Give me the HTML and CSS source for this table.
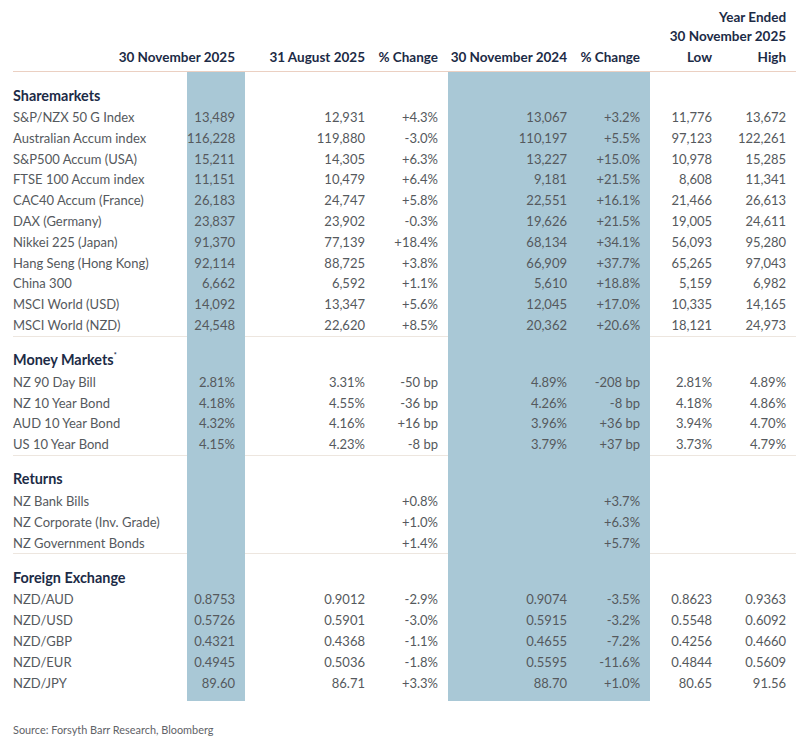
FILE: index.html
```html
<!DOCTYPE html>
<html lang="en">
<head>
<meta charset="utf-8">
<title>Market Summary</title>
<link rel="stylesheet" href="styles.css">
</head>
<body>
<div class="page">
<table class="mkt">
  <colgroup>
    <col class="w-label"><col class="w-c1"><col class="w-c2"><col class="w-c3"><col class="w-c4"><col class="w-c5"><col class="w-c6"><col class="w-c7">
  </colgroup>
  <thead>
    <tr class="h1"><th colspan="6"></th><th colspan="2">Year Ended</th></tr>
    <tr class="h2"><th colspan="6"></th><th colspan="2">30 November 2025</th></tr>
    <tr class="h3"><th colspan="2">30 November 2025</th><th>31 August 2025</th><th>% Change</th><th>30 November 2024</th><th>% Change</th><th>Low</th><th>High</th></tr>
  </thead>
  <tbody>
    <tr class="sec first"><td class="lbl">Sharemarkets</td><td class="hl"></td><td></td><td></td><td class="hl"></td><td class="hl"></td><td></td><td></td></tr>
    <tr><td class="lbl">S&amp;P/NZX 50 G Index</td><td class="hl">13,489</td><td>12,931</td><td>+4.3%</td><td class="hl">13,067</td><td class="hl">+3.2%</td><td>11,776</td><td>13,672</td></tr>
    <tr><td class="lbl">Australian Accum index</td><td class="hl">116,228</td><td>119,880</td><td>-3.0%</td><td class="hl">110,197</td><td class="hl">+5.5%</td><td>97,123</td><td>122,261</td></tr>
    <tr><td class="lbl">S&amp;P500 Accum (USA)</td><td class="hl">15,211</td><td>14,305</td><td>+6.3%</td><td class="hl">13,227</td><td class="hl">+15.0%</td><td>10,978</td><td>15,285</td></tr>
    <tr><td class="lbl">FTSE 100 Accum index</td><td class="hl">11,151</td><td>10,479</td><td>+6.4%</td><td class="hl">9,181</td><td class="hl">+21.5%</td><td>8,608</td><td>11,341</td></tr>
    <tr><td class="lbl">CAC40 Accum (France)</td><td class="hl">26,183</td><td>24,747</td><td>+5.8%</td><td class="hl">22,551</td><td class="hl">+16.1%</td><td>21,466</td><td>26,613</td></tr>
    <tr><td class="lbl">DAX (Germany)</td><td class="hl">23,837</td><td>23,902</td><td>-0.3%</td><td class="hl">19,626</td><td class="hl">+21.5%</td><td>19,005</td><td>24,611</td></tr>
    <tr><td class="lbl">Nikkei 225 (Japan)</td><td class="hl">91,370</td><td>77,139</td><td>+18.4%</td><td class="hl">68,134</td><td class="hl">+34.1%</td><td>56,093</td><td>95,280</td></tr>
    <tr><td class="lbl">Hang Seng (Hong Kong)</td><td class="hl">92,114</td><td>88,725</td><td>+3.8%</td><td class="hl">66,909</td><td class="hl">+37.7%</td><td>65,265</td><td>97,043</td></tr>
    <tr><td class="lbl">China 300</td><td class="hl">6,662</td><td>6,592</td><td>+1.1%</td><td class="hl">5,610</td><td class="hl">+18.8%</td><td>5,159</td><td>6,982</td></tr>
    <tr><td class="lbl">MSCI World (USD)</td><td class="hl">14,092</td><td>13,347</td><td>+5.6%</td><td class="hl">12,045</td><td class="hl">+17.0%</td><td>10,335</td><td>14,165</td></tr>
    <tr><td class="lbl">MSCI World (NZD)</td><td class="hl">24,548</td><td>22,620</td><td>+8.5%</td><td class="hl">20,362</td><td class="hl">+20.6%</td><td>18,121</td><td>24,973</td></tr>

    <tr class="sec"><td class="lbl">Money Markets<sup>*</sup></td><td class="hl"></td><td></td><td></td><td class="hl"></td><td class="hl"></td><td></td><td></td></tr>
    <tr><td class="lbl">NZ 90 Day Bill</td><td class="hl">2.81%</td><td>3.31%</td><td>-50 bp</td><td class="hl">4.89%</td><td class="hl">-208 bp</td><td>2.81%</td><td>4.89%</td></tr>
    <tr><td class="lbl">NZ 10 Year Bond</td><td class="hl">4.18%</td><td>4.55%</td><td>-36 bp</td><td class="hl">4.26%</td><td class="hl">-8 bp</td><td>4.18%</td><td>4.86%</td></tr>
    <tr><td class="lbl">AUD 10 Year Bond</td><td class="hl">4.32%</td><td>4.16%</td><td>+16 bp</td><td class="hl">3.96%</td><td class="hl">+36 bp</td><td>3.94%</td><td>4.70%</td></tr>
    <tr><td class="lbl">US 10 Year Bond</td><td class="hl">4.15%</td><td>4.23%</td><td>-8 bp</td><td class="hl">3.79%</td><td class="hl">+37 bp</td><td>3.73%</td><td>4.79%</td></tr>

    <tr class="sec"><td class="lbl">Returns</td><td class="hl"></td><td></td><td></td><td class="hl"></td><td class="hl"></td><td></td><td></td></tr>
    <tr><td class="lbl">NZ Bank Bills</td><td class="hl"></td><td></td><td>+0.8%</td><td class="hl"></td><td class="hl">+3.7%</td><td></td><td></td></tr>
    <tr><td class="lbl">NZ Corporate (Inv. Grade)</td><td class="hl"></td><td></td><td>+1.0%</td><td class="hl"></td><td class="hl">+6.3%</td><td></td><td></td></tr>
    <tr><td class="lbl">NZ Government Bonds</td><td class="hl"></td><td></td><td>+1.4%</td><td class="hl"></td><td class="hl">+5.7%</td><td></td><td></td></tr>

    <tr class="sec"><td class="lbl">Foreign Exchange</td><td class="hl"></td><td></td><td></td><td class="hl"></td><td class="hl"></td><td></td><td></td></tr>
    <tr><td class="lbl">NZD/AUD</td><td class="hl">0.8753</td><td>0.9012</td><td>-2.9%</td><td class="hl">0.9074</td><td class="hl">-3.5%</td><td>0.8623</td><td>0.9363</td></tr>
    <tr><td class="lbl">NZD/USD</td><td class="hl">0.5726</td><td>0.5901</td><td>-3.0%</td><td class="hl">0.5915</td><td class="hl">-3.2%</td><td>0.5548</td><td>0.6092</td></tr>
    <tr><td class="lbl">NZD/GBP</td><td class="hl">0.4321</td><td>0.4368</td><td>-1.1%</td><td class="hl">0.4655</td><td class="hl">-7.2%</td><td>0.4256</td><td>0.4660</td></tr>
    <tr><td class="lbl">NZD/EUR</td><td class="hl">0.4945</td><td>0.5036</td><td>-1.8%</td><td class="hl">0.5595</td><td class="hl">-11.6%</td><td>0.4844</td><td>0.5609</td></tr>
    <tr><td class="lbl">NZD/JPY</td><td class="hl">89.60</td><td>86.71</td><td>+3.3%</td><td class="hl">88.70</td><td class="hl">+1.0%</td><td>80.65</td><td>91.56</td></tr>
    <tr class="pad"><td></td><td class="hl"></td><td></td><td></td><td class="hl"></td><td class="hl"></td><td></td><td></td></tr>
  </tbody>
</table>
<p class="source">Source: Forsyth Barr Research, Bloomberg</p>
</div>
</body>
</html>
```

FILE: styles.css
```css
html, body {
  margin: 0;
  padding: 0;
  background: #ffffff;
}

body {
  font-family: Lato, "Open Sans", "Liberation Sans", sans-serif;
  color: #55595d;
}

.page {
  padding: 7px 0 0 13px;
}

.mkt {
  width: 783px;
  table-layout: fixed;
  border-collapse: separate;
  border-spacing: 0;
  font-size: 13px;
}

.w-label { width: 174px; }
.w-c1 { width: 58px; }
.w-c2 { width: 130px; }
.w-c3 { width: 73px; }
.w-c4 { width: 129px; }
.w-c5 { width: 73px; }
.w-c6 { width: 72px; }
.w-c7 { width: 74px; }

.mkt th {
  font-size: 13.5px;
  font-weight: 700;
  color: #1c2b46;
  text-align: right;
  padding: 0 10px 0 0;
  white-space: nowrap;
}

.h1 th { line-height: 20px; height: 20px; }
.h2 th { line-height: 19px; height: 19px; }
.h3 th {
  line-height: 22px;
  height: 22px;
  padding-bottom: 3px;
  border-bottom: 1px solid #ebd0c2;
}

.mkt td {
  padding: 0 10px 0 0;
  height: 20.8px;
  line-height: 20.8px;
  text-align: right;
  white-space: nowrap;
}

.mkt td.lbl {
  text-align: left;
  padding: 0;
}

.mkt td.hl {
  background: #a9c8d6;
}

.sec td {
  padding-top: 12.5px;
  padding-bottom: 1.5px;
  height: 21px;
  line-height: 21px;
  border-top: 1px solid #ede6df;
}

.sec.first td {
  border-top: 0;
}

.sec td.hl {
  border-top-color: #a9c8d6;
}

.sec td.lbl {
  padding-top: 12.5px;
  padding-bottom: 1.5px;
  font-size: 14.4px;
  font-weight: 700;
  color: #1c2b46;
}

.sec sup {
  font-size: 7px;
  vertical-align: 7px;
  line-height: 0;
}

.pad td {
  height: 8px;
  line-height: 8px;
  padding: 0;
}

.source {
  margin: 22px 0 0 0;
  font-size: 10.9px;
  line-height: 14px;
  color: #5f6368;
}
```
